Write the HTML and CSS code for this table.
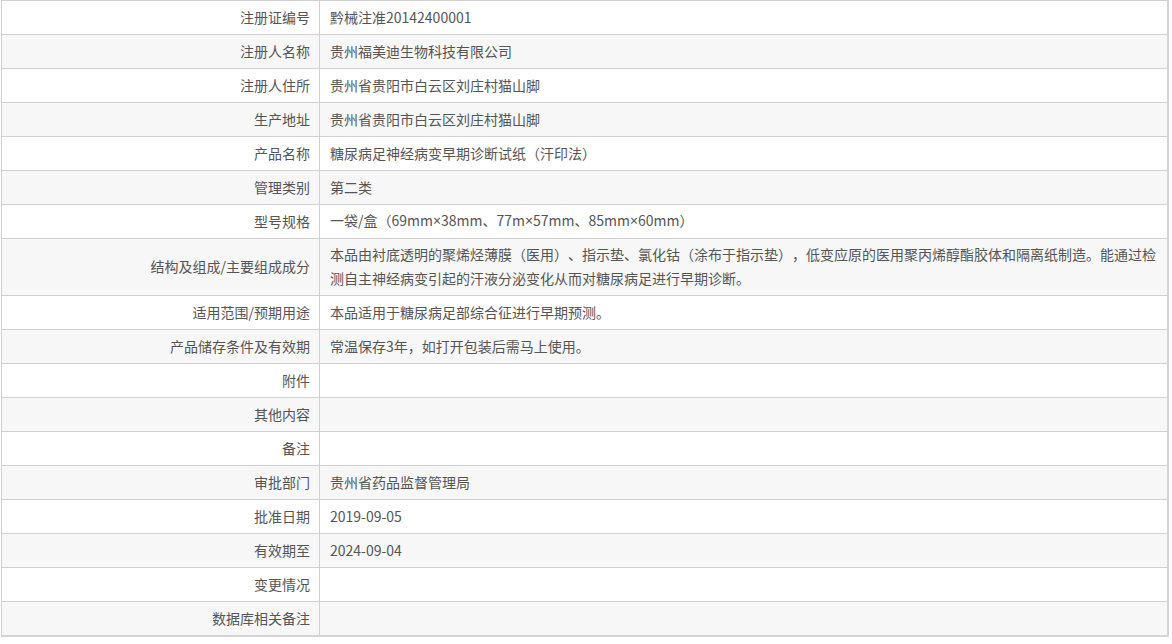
FILE: index.html
```html
<!DOCTYPE html>
<html lang="zh-CN">
<head>
<meta charset="utf-8">
<title>注册信息</title>
<link rel="stylesheet" href="styles.css">
</head>
<body>
<div class="wrap">
<table class="info">
<tbody>
<tr><td class="label">注册证编号</td><td class="value">黔械注准20142400001</td></tr>
<tr><td class="label">注册人名称</td><td class="value">贵州福美迪生物科技有限公司</td></tr>
<tr><td class="label">注册人住所</td><td class="value">贵州省贵阳市白云区刘庄村猫山脚</td></tr>
<tr><td class="label">生产地址</td><td class="value">贵州省贵阳市白云区刘庄村猫山脚</td></tr>
<tr><td class="label">产品名称</td><td class="value">糖尿病足神经病变早期诊断试纸（汗印法）</td></tr>
<tr><td class="label">管理类别</td><td class="value">第二类</td></tr>
<tr><td class="label">型号规格</td><td class="value">一袋/盒（69mm<span class="times">×</span>38mm、77m<span class="times">×</span>57mm、85mm<span class="times">×</span>60mm）</td></tr>
<tr><td class="label">结构及组成/主要组成成分</td><td class="value">本品由衬底透明的聚烯烃薄膜（医用）、指示垫、氯化钴（涂布于指示垫），低变应原的医用聚丙烯醇酯胶体和隔离纸制造。能通过检测自主神经病变引起的汗液分泌变化从而对糖尿病足进行早期诊断。</td></tr>
<tr><td class="label">适用范围/预期用途</td><td class="value">本品适用于糖尿病足部综合征进行早期预测。</td></tr>
<tr><td class="label">产品储存条件及有效期</td><td class="value">常温保存3年，如打开包装后需马上使用。</td></tr>
<tr><td class="label">附件</td><td class="value"></td></tr>
<tr><td class="label">其他内容</td><td class="value"></td></tr>
<tr><td class="label">备注</td><td class="value"></td></tr>
<tr><td class="label">审批部门</td><td class="value">贵州省药品监督管理局</td></tr>
<tr><td class="label">批准日期</td><td class="value">2019-09-05</td></tr>
<tr><td class="label">有效期至</td><td class="value">2024-09-04</td></tr>
<tr><td class="label">变更情况</td><td class="value"></td></tr>
<tr><td class="label">数据库相关备注</td><td class="value"></td></tr>
</tbody>
</table>
</div>
</body>
</html>
```

FILE: styles.css
```css
html, body {
  margin: 0;
  padding: 0;
  background: #fff;
}
.wrap {
  padding: 0 0 0 1px;
}
.info {
  width: 1168px;
  border-collapse: collapse;
  font-family: "Noto Sans CJK SC", "Microsoft YaHei", sans-serif;
  font-size: 14px;
  color: #555;
  border: 1px solid #d0d0d0;
  text-spacing-trim: space-all;
}
.info td {
  border: 1px solid #d0d0d0;
  padding: 3px 9px 5px 10px;
  line-height: 24px;
  height: 25px;
  vertical-align: middle;
}
.info tr:nth-child(even) td {
  background: #f7f7f7;
}
.info tr:last-child td {
  border-bottom: 2px solid #d4d4d4;
}
.info td:last-child {
  border-right: 2px solid #d4d4d4;
}
.info .label {
  width: 298px;
  text-align: right;
}
.info .value {
  text-align: left;
}
.times {
  font-family: "Noto Sans", "Open Sans", sans-serif;
}
```
